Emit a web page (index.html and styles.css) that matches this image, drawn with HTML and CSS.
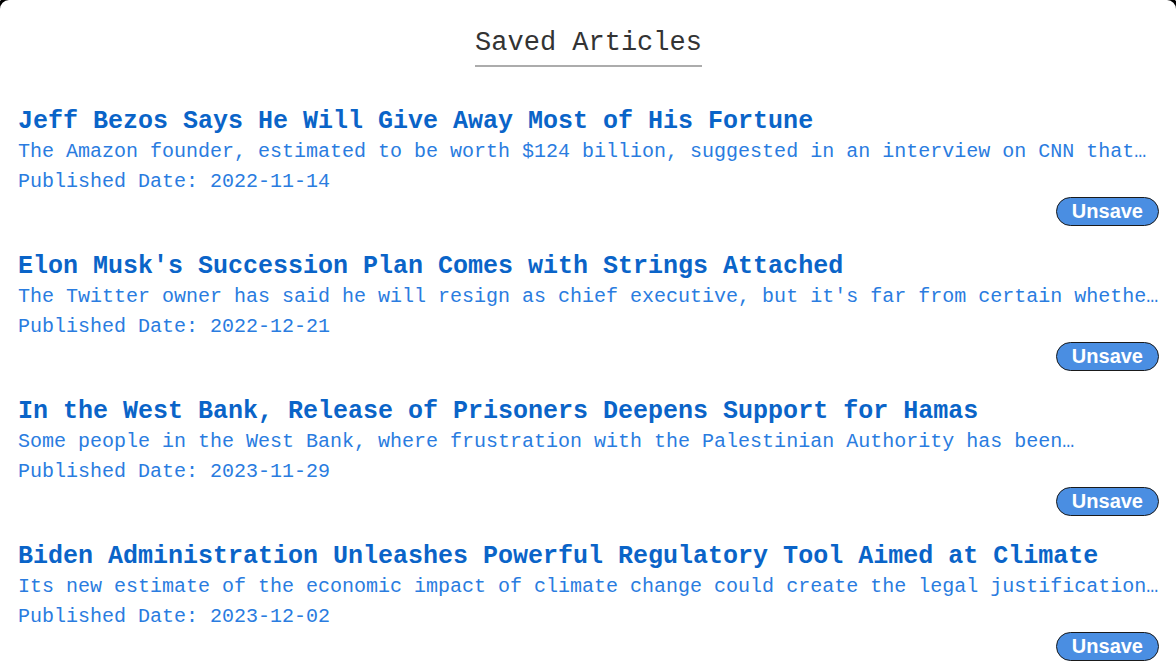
FILE: index.html
```html
<!DOCTYPE html>
<html lang="en">
<head>
<meta charset="utf-8">
<title>Saved Articles</title>
<link rel="stylesheet" href="styles.css">
</head>
<body>
<div class="frame">
  <header class="page-head">
    <h1 class="page-title">Saved Articles</h1>
  </header>
  <main class="articles">
    <article class="article">
      <h3 class="article-title">Jeff Bezos Says He Will Give Away Most of His Fortune</h3>
      <p class="article-desc">The Amazon founder, estimated to be worth $124 billion, suggested in an interview on CNN that he would give away the majority of his wealth during his lifetime.</p>
      <p class="article-date">Published Date: 2022-11-14</p>
      <div class="article-actions"><button class="unsave-btn" type="button">Unsave</button></div>
    </article>
    <article class="article">
      <h3 class="article-title">Elon Musk's Succession Plan Comes with Strings Attached</h3>
      <p class="article-desc">The Twitter owner has said he will resign as chief executive, but it's far from certain whether he will follow through with the plan.</p>
      <p class="article-date">Published Date: 2022-12-21</p>
      <div class="article-actions"><button class="unsave-btn" type="button">Unsave</button></div>
    </article>
    <article class="article">
      <h3 class="article-title">In the West Bank, Release of Prisoners Deepens Support for Hamas</h3>
      <p class="article-desc">Some people in the West Bank, where frustration with the Palestinian Authority has been building for years, have been drawn to Hamas.</p>
      <p class="article-date">Published Date: 2023-11-29</p>
      <div class="article-actions"><button class="unsave-btn" type="button">Unsave</button></div>
    </article>
    <article class="article">
      <h3 class="article-title">Biden Administration Unleashes Powerful Regulatory Tool Aimed at Climate</h3>
      <p class="article-desc">Its new estimate of the economic impact of climate change could create the legal justification for tougher climate rules.</p>
      <p class="article-date">Published Date: 2023-12-02</p>
      <div class="article-actions"><button class="unsave-btn" type="button">Unsave</button></div>
    </article>
  </main>
</div>
</body>
</html>
```

FILE: styles.css
```css
html, body {
  margin: 0;
  padding: 0;
  background: #ffffff;
  overflow: hidden;
}

body {
  font-family: "Liberation Mono", "Courier New", monospace;
}

.frame {
  margin: -3px -3px 0 -3px;
  border: 3px solid #000000;
  border-radius: 12px;
  padding: 28px 17px 0 18px;
  min-height: 700px;
  box-sizing: border-box;
}

.page-head {
  display: flex;
  justify-content: center;
}

.page-title {
  margin: 0;
  font-family: "Liberation Mono", "Courier New", monospace;
  font-weight: normal;
  font-size: 27px;
  line-height: 31px;
  color: #333333;
  padding-bottom: 6px;
  border-bottom: 2px solid #acacac;
}

.articles {
  display: flex;
  flex-direction: column;
  gap: 26px;
  margin-top: 40px;
}

.article {
  display: flex;
  flex-direction: column;
}

.article-title {
  margin: 0;
  font-size: 25px;
  line-height: 30px;
  font-weight: bold;
  color: #0a64c8;
  white-space: nowrap;
}

.article-desc,
.article-date {
  margin: 0;
  font-size: 20px;
  line-height: 30px;
  color: #2a7ce0;
}

.article-desc {
  display: -webkit-box;
  -webkit-box-orient: vertical;
  -webkit-line-clamp: 1;
  overflow: hidden;
}

.article-actions {
  display: flex;
  justify-content: flex-end;
}

.unsave-btn {
  font-family: "Liberation Sans", Arial, sans-serif;
  font-weight: bold;
  font-size: 20px;
  line-height: 23px;
  color: #ffffff;
  background: #4a8ee2;
  border: 1px solid #1a1a1a;
  border-radius: 15px;
  padding: 2px 15px;
  margin: 0;
  cursor: pointer;
}
```
